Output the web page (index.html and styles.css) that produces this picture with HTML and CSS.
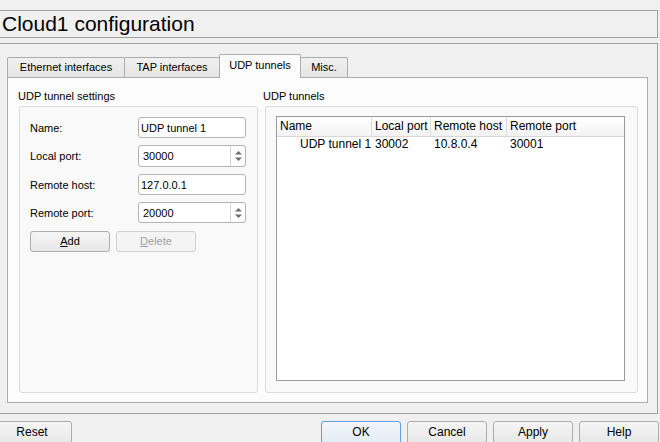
FILE: index.html
```html
<!DOCTYPE html>
<html>
<head>
<meta charset="utf-8">
<link rel="stylesheet" href="styles.css">
</head>
<body>
<div class="title">Cloud1 configuration</div>
<div class="frame">
  <div class="tabbar">
    <div class="tab t1">Ethernet interfaces</div>
    <div class="tab t2">TAP interfaces</div>
    <div class="tab t3 sel">UDP tunnels</div>
    <div class="tab t4">Misc.</div>
  </div>
  <div class="pane">
    <div class="col left">
      <div class="glabel">UDP tunnel settings</div>
      <div class="gbox lbox">
        <div class="form">
          <div class="flabel">Name:</div>
          <div class="input h21"><span class="val">UDP tunnel 1</span></div>
          <div class="flabel">Local port:</div>
          <div class="input spin h22"><span class="val sv">30000</span><span class="spinbtn"><svg width="9" height="14" viewBox="0 0 9 14"><path d="M1 5.5 L4.5 2 L8 5.5 Z M1 8.5 L4.5 12 L8 8.5 Z" fill="#6d6d6d"/></svg></span></div>
          <div class="flabel">Remote host:</div>
          <div class="input h21"><span class="val">127.0.0.1</span></div>
          <div class="flabel">Remote port:</div>
          <div class="input spin h21"><span class="val sv">20000</span><span class="spinbtn"><svg width="9" height="14" viewBox="0 0 9 14"><path d="M1 5.5 L4.5 2 L8 5.5 Z M1 8.5 L4.5 12 L8 8.5 Z" fill="#6d6d6d"/></svg></span></div>
        </div>
        <div class="btnrow">
          <div class="btn small"><u>A</u>dd</div>
          <div class="btn small disabled"><u>D</u>elete</div>
        </div>
      </div>
    </div>
    <div class="col right">
      <div class="glabel">UDP tunnels</div>
      <div class="gbox rbox">
        <div class="tree">
          <div class="thead">
            <div class="th c1">Name</div>
            <div class="th c2">Local port</div>
            <div class="th c3">Remote host</div>
            <div class="th c4">Remote port</div>
          </div>
          <div class="trow">
            <div class="td c1 name">UDP tunnel 1</div>
            <div class="td c2">30002</div>
            <div class="td c3">10.8.0.4</div>
            <div class="td c4">30001</div>
          </div>
        </div>
      </div>
    </div>
  </div>
</div>
<div class="bottom">
  <div class="btn big">Reset</div>
  <div class="rgroup">
    <div class="btn big default">OK</div>
    <div class="btn big">Cancel</div>
    <div class="btn big">Apply</div>
    <div class="btn big">Help</div>
  </div>
</div>
</body>
</html>
```
FILE: styles.css
```css
html, body {
  margin: 0;
  padding: 0;
  background: #f0f0f0;
  font-family: "Liberation Sans", Arial, sans-serif;
  font-size: 11px;
  color: #000;
  overflow: hidden;
  width: 660px;
  height: 442px;
}
.title {
  margin: 10px 2px 0 -1px;
  height: 26px;
  border: 1px solid #a0a0a0;
  font-size: 21px;
  line-height: 26px;
  padding-left: 2px;
  box-sizing: content-box;
}
.frame {
  margin: 5px 2px 0 -1px;
  border: 1px solid #a0a0a0;
  height: 359px;
  padding: 10px 9px 0 7px;
  box-sizing: content-box;
}
.tabbar {
  display: flex;
  height: 24px;
  margin-bottom: -1px;
  position: relative;
  z-index: 1;
}
.tab {
  box-sizing: border-box;
  height: 20px;
  margin-top: 3px;
  border: 1px solid #acacac;
  border-bottom: none;
  background: linear-gradient(#f0f0f0, #e5e5e5);
  text-align: center;
  line-height: 19px;
  border-radius: 2px 2px 0 0;
}
.t1 { width: 118px; }
.t2 { width: 96px; margin-left: -1px; }
.t3 { width: 82px; margin-left: -1px; }
.t4 { width: 48px; margin-left: -1px; }
.tab.sel {
  height: 24px;
  margin-top: 0;
  background: #fcfcfc;
  line-height: 20px;
}
.pane {
  border: 1px solid #acacac;
  background: #fcfcfc;
  display: flex;
  gap: 5px;
  padding: 10px 0 0 10px;
  width: 629px;
  height: 314px;
  box-sizing: content-box;
}
.col {
  display: flex;
  flex-direction: column;
  height: 305px;
}
.left { width: 240px; }
.right { width: 375px; }
.glabel {
  height: 18px;
  line-height: 16px;
}
.gbox {
  flex: 1;
  border: 1px solid #dcdcdc;
  border-radius: 3px;
  background: #f9f9f9;
  box-sizing: border-box;
}
.lbox {
  margin-left: 1px;
  padding: 10px 11px 0 10px;
}
.rbox {
  margin-left: 2px;
  padding: 9px 12px 11px 10px;
}
.form {
  display: grid;
  grid-template-columns: 108px 108px;
  grid-template-rows: 21px 22px 21px 21px;
  row-gap: 7px;
  align-items: center;
}
.input {
  box-sizing: border-box;
  background: #fff;
  border: 1px solid #b4b4b4;
  border-radius: 3px;
  display: flex;
  align-items: center;
  height: 100%;
}
.val { padding-left: 2px; }
.sv { padding-left: 4px; flex: 1; }
.spin { justify-content: space-between; }
.spinbtn {
  width: 14px;
  height: 100%;
  border-left: 1px solid #d6d6d6;
  display: flex;
  align-items: center;
  justify-content: center;
}
.btnrow {
  display: flex;
  gap: 6px;
  margin-top: 8px;
}
.btn {
  box-sizing: border-box;
  border: 1px solid #adadad;
  border-radius: 3px;
  background: linear-gradient(#f5f5f5, #e8e8e8);
  text-align: center;
}
.btn.small {
  width: 80px;
  height: 21px;
  line-height: 19px;
}
.btn.disabled {
  color: #a0a0a0;
  border-color: #d0d0d0;
  background: #f4f4f4;
}
.tree {
  background: #fff;
  border: 1px solid #9a9a9a;
  height: 100%;
  box-sizing: border-box;
}
.thead {
  display: flex;
  height: 20px;
  border-bottom: 1px solid #d8d8d8;
  background: linear-gradient(#ffffff, #f3f3f3);
  box-sizing: border-box;
}
.th {
  box-sizing: border-box;
  border-right: 1px solid #dcdcdc;
  line-height: 19px;
  padding-left: 3px;
  font-size: 12px;
}
.c1 { width: 95px; }
.c2 { width: 59px; }
.c3 { width: 76px; }
.c4 { width: 117px; border-right: none; }
.trow {
  display: flex;
  height: 17px;
  line-height: 14px;
}
.td {
  padding-left: 3px;
  box-sizing: border-box;
  font-size: 12px;
}
.td.name { padding-left: 23px; }
.bottom {
  display: flex;
  justify-content: space-between;
  margin: 7px 1px 0 -8px;
}
.rgroup {
  display: flex;
  gap: 6px;
}
.btn.big {
  width: 80px;
  height: 23px;
  line-height: 21px;
  font-size: 12px;
}
.btn.default {
  border-color: #5fa0e0;
  background: linear-gradient(#f2f6fb, #e3ecf6);
}
```
